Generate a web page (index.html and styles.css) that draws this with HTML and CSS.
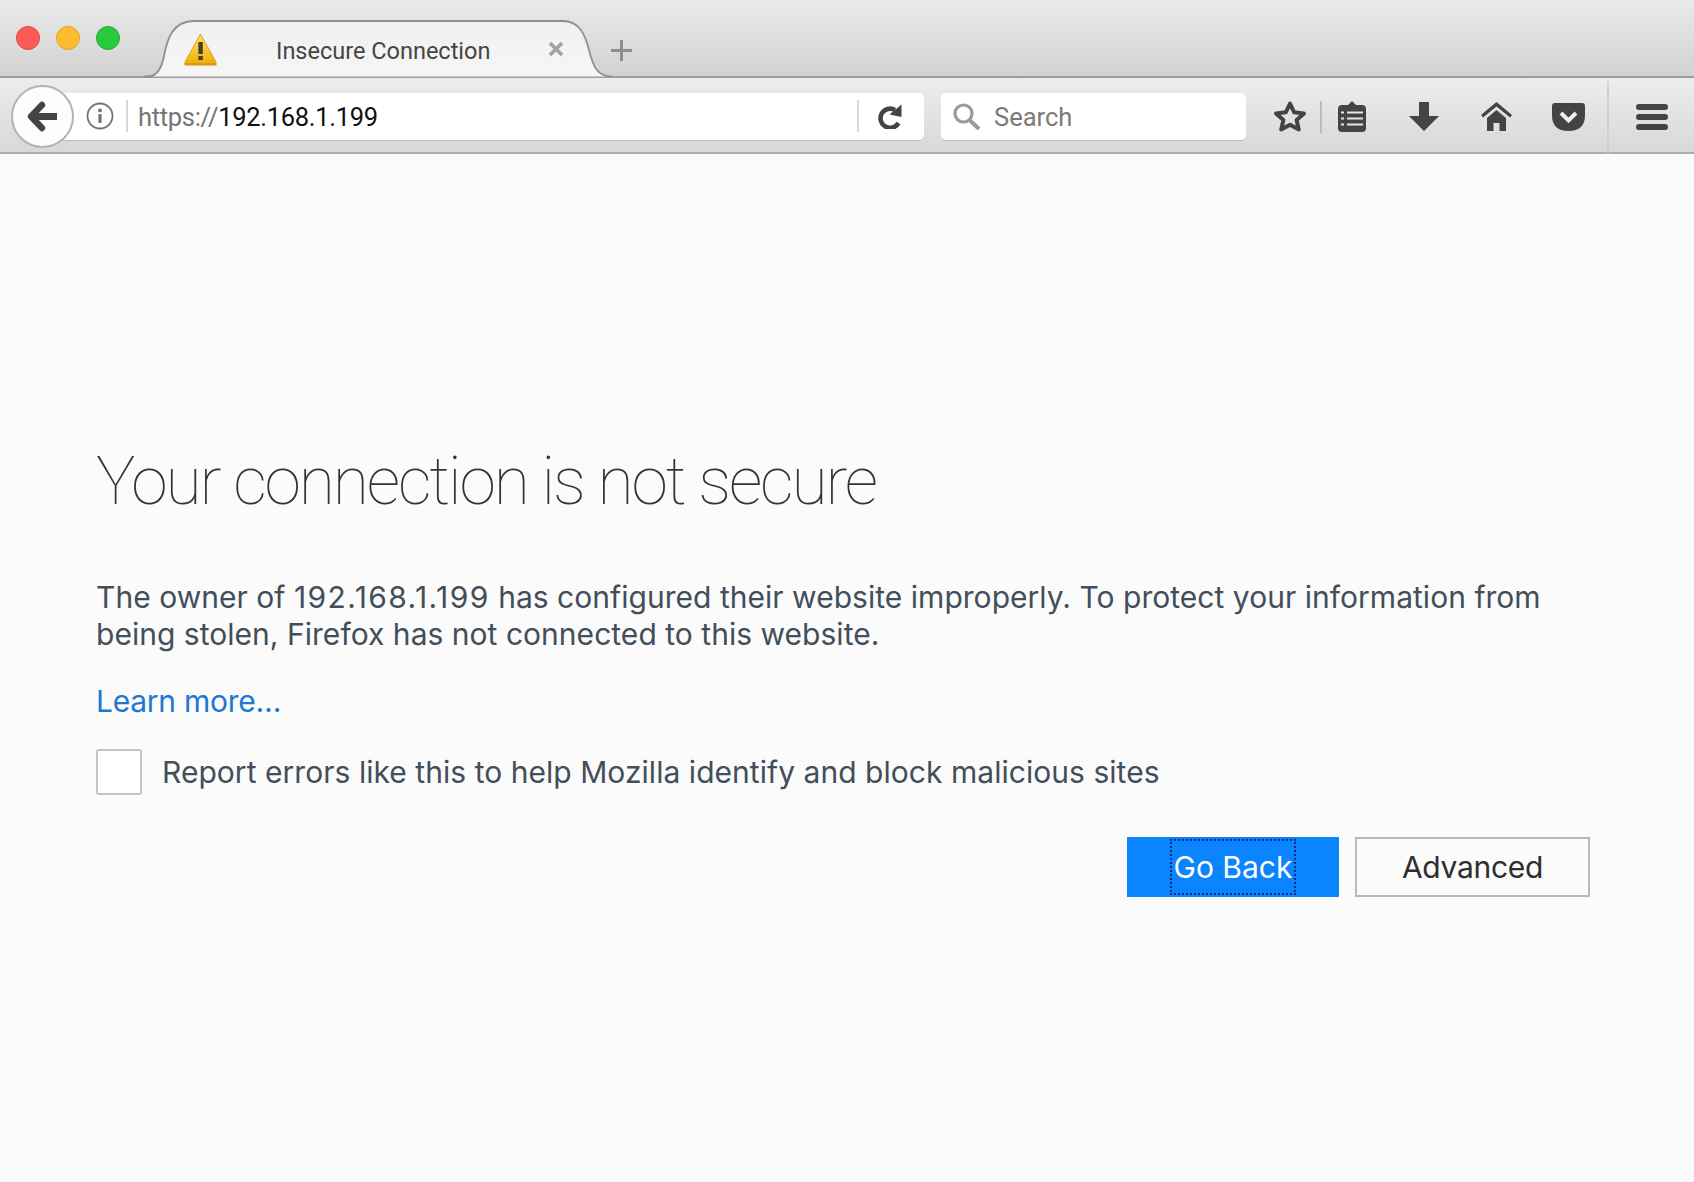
FILE: index.html
```html
<!DOCTYPE html>
<html>
<head>
    <meta charset="UTF-8">
    <title>Insecure Connection</title>
    <link rel="stylesheet" href="styles.css">
</head>
<body>
    <div class="titlebar">
        <div class="lights">
            <span class="light red"></span>
            <span class="light yellow"></span>
            <span class="light green"></span>
        </div>
        <div class="tab">
            <svg class="tab-shape" width="468" height="58" viewBox="0 0 468 58">
                <defs>
                    <linearGradient id="tabFill" x1="0" y1="0" x2="0" y2="1">
                        <stop offset="0" stop-color="#f0f0f0"/>
                        <stop offset="1" stop-color="#f6f6f6"/>
                    </linearGradient>
                </defs>
                <path d="M0 56.5 H4 C14 56.5 18 46 20 36 C23 20 28 1 50 1 H419 C435 1 441 14 445 30 C449 46 453 56.5 468 56.5" fill="url(#tabFill)" stroke="#8f8f8f" stroke-width="1.8"/>
            </svg>
            <svg class="warn-icon" width="33" height="33" viewBox="0 0 33 33">
                <defs>
                    <linearGradient id="warnFill" x1="0" y1="0" x2="0" y2="1">
                        <stop offset="0" stop-color="#fde36a"/>
                        <stop offset="1" stop-color="#f0ae0a"/>
                    </linearGradient>
                </defs>
                <path d="M16.5 1 L32 29 Q32.5 31 30 31 H3 Q0.5 31 1 29 Z" fill="url(#warnFill)" stroke="#dba41a" stroke-width="1"/>
                <rect x="0.5" y="30" width="32" height="2.5" fill="#d99a10"/>
                <rect x="14.4" y="9" width="4.4" height="12" fill="#4a3c1c"/>
                <rect x="14.4" y="23" width="4.4" height="4" fill="#4a3c1c"/>
            </svg>
            <span class="tab-title">Insecure Connection</span>
            <svg class="tab-close" width="16" height="16" viewBox="0 0 16 16">
                <path d="M2 2 L14 14 M14 2 L2 14" stroke="#a2a2a2" stroke-width="3.6"/>
            </svg>
        </div>
        <svg class="new-tab" width="21" height="21" viewBox="0 0 21 21">
            <path d="M10.5 0 V21 M0 10.5 H21" stroke="#8e8e8e" stroke-width="3"/>
        </svg>
    </div>

    <div class="navbar">
        <div class="back-btn">
            <svg width="31" height="31" viewBox="0 0 31 31">
                <path d="M15 4 L4 15.5 L15 27" fill="none" stroke="#444" stroke-width="6.4" stroke-linecap="round" stroke-linejoin="round"/>
                <path d="M5 15.5 H30" stroke="#444" stroke-width="7"/>
            </svg>
        </div>
        <div class="urlbar">
            <svg class="info-icon" width="28" height="28" viewBox="0 0 28 28">
                <circle cx="14" cy="14" r="12.5" fill="none" stroke="#737373" stroke-width="1.8"/>
                <rect x="12.4" y="12" width="3.2" height="9" rx="1" fill="#737373"/>
                <circle cx="14" cy="8.4" r="1.9" fill="#737373"/>
            </svg>
            <span class="url-sep"></span>
            <span class="url-text"><span class="url-scheme">https://</span>192.168.1.199</span>
            <span class="url-sep reload-sep"></span>
            <svg class="reload-icon" width="25" height="25" viewBox="0 0 25 25">
                <path d="M18 6 A9.6 9.6 0 1 0 21.5 19" fill="none" stroke="#444" stroke-width="4.6"/>
                <path d="M12.5 10.5 L24.5 0.5 V13 Z" fill="#444"/>
            </svg>
        </div>
        <div class="searchbar">
            <svg width="28" height="27" viewBox="0 0 28 27">
                <circle cx="10.5" cy="10.5" r="8.5" fill="none" stroke="#9a9a9a" stroke-width="3.2"/>
                <path d="M16.5 17 L26 26" stroke="#9a9a9a" stroke-width="4"/>
            </svg>
            <span class="search-text">Search</span>
        </div>
        <div class="toolbar">
            <svg class="tool-star" width="34" height="33" viewBox="0 0 34 33">
                <path d="M17 3.5 L21.2 12.3 L31 13.4 L23.6 20 L25.8 29.5 L17 24.8 L8.2 29.5 L10.4 20 L3 13.4 L12.8 12.3 Z" fill="none" stroke="#444" stroke-width="4" stroke-linejoin="round"/>
            </svg>
            <span class="tool-sep"></span>
            <svg class="tool-list" width="28" height="31" viewBox="0 0 28 31">
                <path d="M14 0 L19 5 H9 Z" fill="#444"/>
                <rect x="0" y="4" width="28" height="27" rx="4" fill="#444"/>
                <path d="M9 11.5 H25 M9 17.5 H25 M9 23.5 H25 M3 11.5 H6 M3 17.5 H6 M3 23.5 H6" stroke="#e6e6e6" stroke-width="2"/>
            </svg>
            <svg class="tool-down" width="30" height="29" viewBox="0 0 30 29">
                <path d="M10 0 H20 V14 H30 L15 29 L0 14 H10 Z" fill="#444"/>
            </svg>
            <svg class="tool-home" width="31" height="29" viewBox="0 0 31 29">
                <path d="M15.5 0 L31 13 L29 15.5 L15.5 4.5 L2 15.5 L0 13 Z" fill="#444"/>
                <path d="M15.5 8 L25 16 V29 H18.5 V21 H12.5 V29 H6 V16 Z" fill="#444"/>
            </svg>
            <svg class="tool-pocket" width="33" height="28" viewBox="0 0 33 28">
                <path d="M3 0 H30 Q33 0 33 3 V12 Q33 28 16.5 28 Q0 28 0 12 V3 Q0 0 3 0 Z" fill="#444"/>
                <path d="M9 10 L16.5 17.5 L24 10" fill="none" stroke="#eeeeee" stroke-width="4"/>
            </svg>
            <span class="tool-sep menu-sep"></span>
            <div class="tool-menu">
                <span></span>
                <span></span>
                <span></span>
            </div>
        </div>
    </div>

    <div class="page">
        <h1 class="page-title">Your connection is not secure</h1>
        <p class="page-desc">
            <span class="desc-line">The owner of <span class="host">192.168.1.199</span> has configured their website improperly. To protect your information from</span>
            <span class="desc-line">being stolen, Firefox has not connected to this website.</span>
        </p>
        <a class="learn-more" href="#">Learn more…</a>
        <label class="report">
            <span class="checkbox"></span>
            <span>Report errors like this to help Mozilla identify and block malicious sites</span>
        </label>
        <div class="button-group">
            <button class="button primary"><span class="focus-ring">Go Back</span></button>
            <button class="button advanced">Advanced</button>
        </div>
    </div>
</body>
</html>
```

FILE: styles.css
```css
html, body {
    margin: 0;
    height: 100%;
}
body {
    display: flex;
    flex-direction: column;
    font-family: Inter, 'Liberation Sans', sans-serif;
    background-color: #fbfbfb;
    overflow: hidden;
}
.titlebar {
    display: flex;
    align-items: flex-start;
    height: 78px;
    flex-shrink: 0;
    box-sizing: border-box;
    border-bottom: 2px solid #9c9c9c;
    background: linear-gradient(#e9e9e9, #d2d2d2);
}
.lights {
    display: flex;
    gap: 16px;
    padding: 26px 0 0 16px;
}
.light {
    width: 24px;
    height: 24px;
    border-radius: 50%;
    box-sizing: border-box;
}
.red {
    background-color: #fc5b57;
    border: 1px solid #e2463f;
}
.yellow {
    background-color: #fdbc2f;
    border: 1px solid #e0a028;
}
.green {
    background-color: #29c83f;
    border: 1px solid #1fae2d;
}
.tab {
    position: relative;
    display: flex;
    align-items: center;
    width: 468px;
    height: 58px;
    margin: 20px 0 0 24px;
    flex-shrink: 0;
}
.tab-shape {
    position: absolute;
    left: 0;
    top: 0;
}
.warn-icon {
    position: relative;
    margin: 0 0 0 40px;
}
.tab-title {
    position: relative;
    margin: 4px 0 0 59px;
    width: 272px;
    font-family: Roboto, sans-serif;
    font-size: 23.5px;
    color: #454545;
}
.tab-close {
    position: relative;
}
.new-tab {
    margin: 40px 0 0 -1px;
}
.navbar {
    display: flex;
    align-items: center;
    height: 76px;
    flex-shrink: 0;
    box-sizing: border-box;
    padding: 3px 0 0 11px;
    border-bottom: 2px solid #adadad;
    background: linear-gradient(#ededed, #d8d8d8);
}
.back-btn {
    position: relative;
    z-index: 1;
    display: flex;
    align-items: center;
    justify-content: center;
    width: 63px;
    height: 63px;
    box-sizing: border-box;
    border: 2px solid #b4b4b4;
    border-radius: 50%;
    background-color: #fdfdfd;
}
.urlbar {
    display: flex;
    align-items: center;
    width: 868px;
    height: 48px;
    margin-left: -18px;
    padding-left: 30px;
    box-sizing: border-box;
    background-color: #ffffff;
    border-bottom: 1px solid #b9b9b9;
    border-radius: 0 5px 5px 0;
}
.info-icon {
    flex-shrink: 0;
}
.url-sep {
    width: 2px;
    height: 32px;
    margin-left: 12px;
    background-color: #d8d8d8;
    flex-shrink: 0;
}
.url-text {
    width: 719px;
    margin: 2px 0 0 10px;
    font-family: Roboto, sans-serif;
    font-size: 25.5px;
    letter-spacing: -0.3px;
    color: #111;
}
.url-scheme {
    color: #757575;
}
.reload-sep {
    margin-left: 0;
}
.reload-icon {
    margin-left: 18px;
}
.searchbar {
    display: flex;
    align-items: center;
    gap: 13px;
    width: 305px;
    height: 48px;
    margin-left: 17px;
    padding-left: 12px;
    box-sizing: border-box;
    background-color: #ffffff;
    border-bottom: 1px solid #b9b9b9;
    border-radius: 5px;
}
.search-text {
    margin-top: 2px;
    font-family: Roboto, sans-serif;
    font-size: 25.5px;
    color: #7a7a7a;
}
.toolbar {
    display: flex;
    align-items: center;
    margin-left: 27px;
    align-self: stretch;
}
.tool-sep {
    width: 2px;
    height: 32px;
    margin-left: 13px;
    background-color: #bcbcbc;
}
.tool-list {
    margin-left: 16px;
}
.tool-down {
    margin-left: 43px;
}
.tool-home {
    margin-left: 42px;
}
.tool-pocket {
    margin-left: 40px;
}
.menu-sep {
    height: 72px;
    margin-left: 22px;
    background-color: #cfcfcf;
}
.tool-menu {
    display: flex;
    flex-direction: column;
    gap: 4px;
    margin-left: 27px;
}
.tool-menu span {
    display: block;
    width: 32px;
    height: 6px;
    border-radius: 3px;
    background-color: #444;
}
.page {
    display: flex;
    flex-direction: column;
    align-items: flex-start;
    padding: 289px 104px 0 96px;
    color: #424e5a;
}
.page-title {
    margin: 0;
    font-family: Roboto, sans-serif;
    font-size: 66px;
    font-weight: 100;
    line-height: 78px;
    letter-spacing: -2.1px;
    color: #333;
}
.page-desc {
    margin: 58px 0 0;
    font-size: 30px;
    line-height: 37px;
    letter-spacing: 0.03px;
}
.desc-line {
    display: block;
}
.host {
    letter-spacing: 1.4px;
}
.learn-more {
    margin-top: 30px;
    font-size: 30px;
    line-height: 37px;
    letter-spacing: -0.25px;
    color: #1c78d4;
    text-decoration: none;
}
.report {
    display: flex;
    align-items: center;
    gap: 20px;
    margin-top: 29px;
    font-size: 30px;
    letter-spacing: 0.04px;
}
.checkbox {
    width: 46px;
    height: 46px;
    box-sizing: border-box;
    border: 2px solid #c4c4c4;
    border-radius: 3px;
    background-color: #ffffff;
}
.button-group {
    display: flex;
    justify-content: flex-end;
    gap: 16px;
    align-self: stretch;
    margin-top: 42px;
}
.button {
    display: flex;
    align-items: center;
    justify-content: center;
    width: 235px;
    height: 60px;
    padding: 0;
    border: 2px solid #b9b9b9;
    background-color: #fbfbfb;
    font-family: Inter, sans-serif;
    font-size: 30px;
    color: #2e2e2e;
}
.button.advanced {
    letter-spacing: -0.3px;
}
.button.primary {
    width: 212px;
    border: none;
    background-color: #0a84ff;
    color: #ffffff;
}
.focus-ring {
    display: flex;
    align-items: center;
    height: 56px;
    padding: 0 2px;
    box-sizing: border-box;
    border: 2px dotted #0b2a80;
}
```
